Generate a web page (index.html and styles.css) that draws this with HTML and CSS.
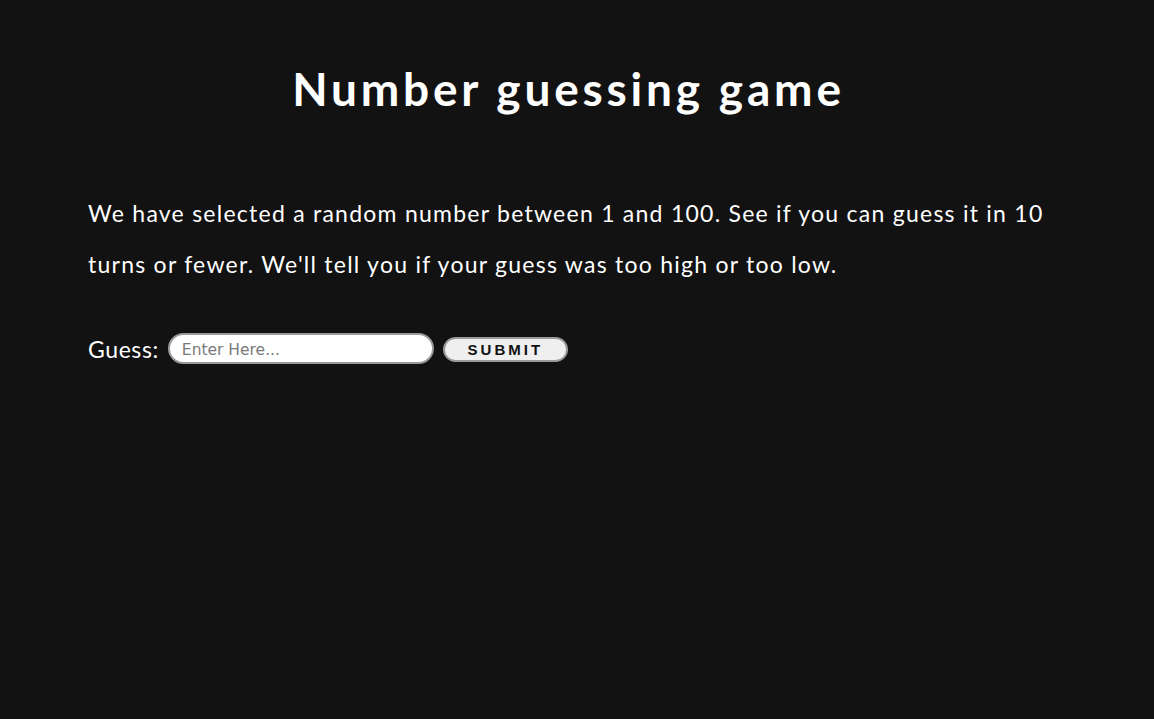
FILE: index.html
```html
<!DOCTYPE html>
<html lang="en">
<head>
<meta charset="utf-8">
<title>Number guessing game</title>
<link rel="stylesheet" href="styles.css">
</head>
<body>
<main class="page">
  <h1 class="title">Number guessing game</h1>
  <p class="intro">We have selected a random number between 1 and 100. See if you can guess it in 10 turns or fewer. We'll tell you if your guess was too high or too low.</p>
  <div class="form-row">
    <label class="guess-label" for="guessField">Guess:</label>
    <input class="guess-field" id="guessField" type="text" placeholder="Enter Here...">
    <button class="guess-submit" type="button">SUBMIT</button>
  </div>
</main>
</body>
</html>
```

FILE: styles.css
```css
html, body {
  margin: 0;
  padding: 0;
  background: #121212;
  height: 100%;
}
body {
  color: #ffffff;
  font-family: "Lato", "Open Sans", sans-serif;
}
.page {
  width: 961px;
  padding: 0 0 0 88px;
}
.title {
  margin: 0;
  padding-top: 60px;
  text-align: center;
  font-size: 46px;
  font-weight: 700;
  letter-spacing: 3.8px;
  line-height: 58px;
}
.intro {
  margin: 70px 0 0;
  font-size: 23px;
  line-height: 51px;
  letter-spacing: 1.25px;
}
.form-row {
  display: flex;
  align-items: center;
  margin-top: 43px;
}
.guess-label {
  font-size: 23px;
  letter-spacing: 0.6px;
  margin-right: 9px;
}
.guess-field {
  box-sizing: border-box;
  width: 266px;
  height: 31px;
  border: 2px solid #9a9a9a;
  border-radius: 16px;
  background: #fff;
  padding: 3px 12px 0;
  font-family: "DejaVu Sans", sans-serif;
  font-size: 15.5px;
  color: #222;
  outline: none;
}
.guess-field::placeholder {
  color: #7a7a7a;
}
.guess-submit {
  box-sizing: border-box;
  margin-left: 9px;
  width: 125px;
  height: 25px;
  border: 2px solid #9a9a9a;
  border-radius: 13px;
  background: #efefef;
  font-family: "Liberation Sans", Arial, sans-serif;
  font-weight: 700;
  font-size: 15px;
  letter-spacing: 3px;
  color: #111;
  padding: 0;
  margin-top: 2px;
}
```
